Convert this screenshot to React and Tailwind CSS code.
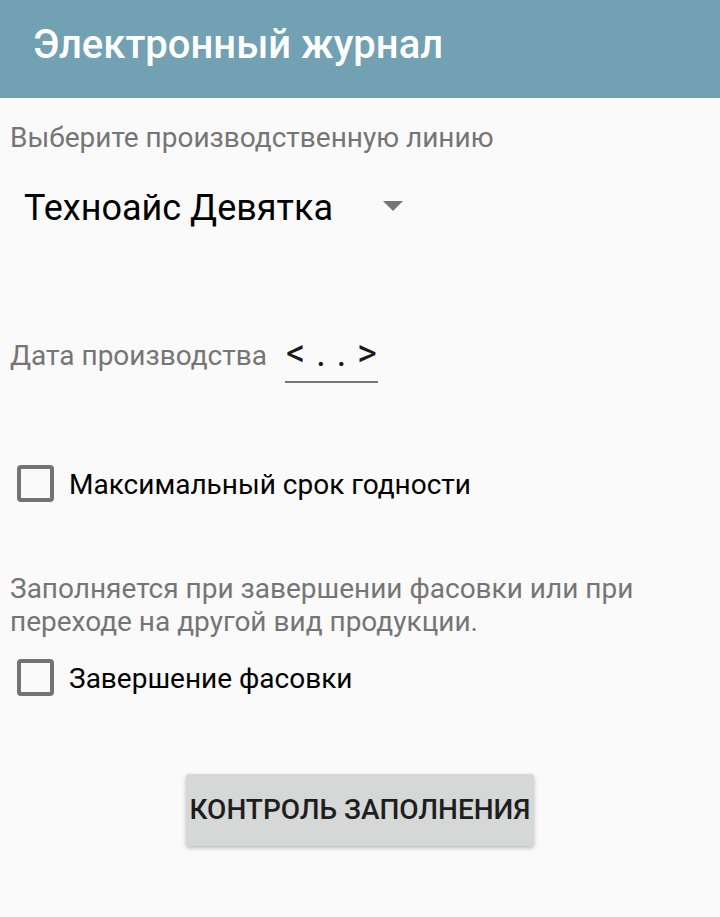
export default function App() {
  return (
    <div className="w-[720px] h-[917px] bg-[#fafafa] flex flex-col" style={{ fontFamily: 'Roboto, "Noto Sans", sans-serif' }}>
      <div className="h-[98px] bg-[#71a1b2] flex items-start pl-[33px] pt-[21px] shrink-0">
        <span className="text-white text-[40px] font-medium leading-[48px] whitespace-nowrap">Электронный журнал</span>
      </div>

      <div className="pl-[10px] pt-[24px] text-[28px] leading-[32px] text-[#757575] whitespace-nowrap">Выберите производственную линию</div>

      <div className="flex items-start pl-[24px] pt-[34px]">
        <span className="text-[36px] leading-[40px] text-black whitespace-nowrap">Техноайс Девятка</span>
        <svg className="ml-[50px] mt-[13px] shrink-0" width="20" height="10" viewBox="0 0 20 10">
          <path d="M0 0 L20 0 L10 10 Z" fill="#757575" />
        </svg>
      </div>

      <div className="flex items-start pl-[10px] pt-[112px]">
        <span className="text-[28px] leading-[32px] text-[#757575] whitespace-nowrap">Дата производства</span>
        <div className="ml-[18px] w-[93px] flex flex-col">
          <div className="flex justify-between px-[1px] mt-[-3px] text-[38px] leading-[32px] text-[#1a1a1a]">
            <span>&lt;</span>
            <span>.</span>
            <span>.</span>
            <span>&gt;</span>
          </div>
          <div className="h-[2px] bg-[#757575] mt-[12px]"></div>
        </div>
      </div>

      <div className="flex items-start pl-[17px] pt-[82px]">
        <div className="w-[37px] h-[37px] border-[4px] border-[#737373] rounded-[4px] shrink-0"></div>
        <span className="ml-[15px] mt-[4px] text-[28px] leading-[32px] text-black whitespace-nowrap">Максимальный срок годности</span>
      </div>

      <div className="pl-[10px] pr-[10px] pt-[70px] text-[28px] leading-[33px] text-[#757575] whitespace-nowrap">
        Заполняется при завершении фасовки или при<br />переходе на другой вид продукции.
      </div>

      <div className="flex items-start pl-[17px] pt-[21px]">
        <div className="w-[37px] h-[37px] border-[4px] border-[#737373] rounded-[4px] shrink-0"></div>
        <span className="ml-[15px] mt-[4px] text-[28px] leading-[32px] text-black whitespace-nowrap">Завершение фасовки</span>
      </div>

      <div className="flex justify-center pt-[78px]">
        <div className="w-[348px] h-[72px] bg-[#d6d7d7] rounded-[3px] shadow-[0_2px_4px_rgba(0,0,0,0.25)] flex items-center justify-center">
          <span className="text-[28px] font-medium text-[#1e1e1e] whitespace-nowrap leading-[32px]">КОНТРОЛЬ ЗАПОЛНЕНИЯ</span>
        </div>
      </div>
    </div>
  );
}
